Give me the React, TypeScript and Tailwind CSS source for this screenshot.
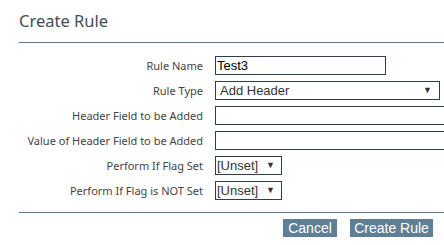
export default function App() {
  const rows: { label: string; kind: 'text' | 'select' | 'flag'; value?: string; width: string }[] = [
    { label: 'Rule Name', kind: 'text', value: 'Test3', width: 'w-[171px]' },
    { label: 'Rule Type', kind: 'select', value: 'Add Header', width: 'w-[225px]' },
    { label: 'Header Field to be Added', kind: 'text', value: '', width: 'w-[250px]' },
    { label: 'Value of Header Field to be Added', kind: 'text', value: '', width: 'w-[250px]' },
    { label: 'Perform If Flag Set', kind: 'flag', value: '[Unset]', width: 'w-[67px]' },
    { label: 'Perform If Flag is NOT Set', kind: 'flag', value: '[Unset]', width: 'w-[67px]' },
  ];

  return (
    <div className="w-[444px] h-[245px] overflow-hidden bg-white font-['Noto_Sans',sans-serif]">
      <div className="pl-[19px]">
        <h1 className="h-[42px] pt-[10px] text-[16.5px] leading-[22px] text-[#434d57]">Create Rule</h1>
        <div className="h-px bg-[#5b7a92]" />

        <div className="mt-[13px] flex flex-col gap-[6px]">
          {rows.map((r) => (
            <div key={r.label} className="flex h-[19px] items-center gap-[12px]">
              <div className="w-[184px] shrink-0 text-right text-[11px] leading-[19px] text-[#444]">{r.label}</div>
              <div
                className={`${r.width} shrink-0 h-[19px] border border-[#2d3e50] flex items-center font-['Liberation_Sans',Arial,sans-serif] text-[13px] leading-[17px]`}
              >
                {r.kind === 'text' && <span className="pl-[1px] text-black">{r.value}</span>}
                {r.kind === 'select' && (
                  <>
                    <span className="pl-[4px] text-[#333] flex-1">{r.value}</span>
                    <span className="pr-[7px] text-[9px] text-[#333]">▼</span>
                  </>
                )}
                {r.kind === 'flag' && (
                  <>
                    <span className="pl-[1px] text-[#333] flex-1">{r.value}</span>
                    <span className="pr-[6px] text-[9px] text-[#333]">▼</span>
                  </>
                )}
              </div>
            </div>
          ))}
        </div>

        <div className="mt-[12px] h-px bg-[#5b7a92]" />

        <div className="mt-[6px] flex justify-end gap-[13px] pr-[11px] font-['Liberation_Sans',Arial,sans-serif]">
          <button className="h-[18px] w-[54px] bg-[#5f7f96] text-[14px] leading-[18px] text-white">Cancel</button>
          <button className="h-[18px] w-[83px] bg-[#5f7f96] text-[14px] leading-[18px] text-white">Create Rule</button>
        </div>
      </div>
    </div>
  );
}
